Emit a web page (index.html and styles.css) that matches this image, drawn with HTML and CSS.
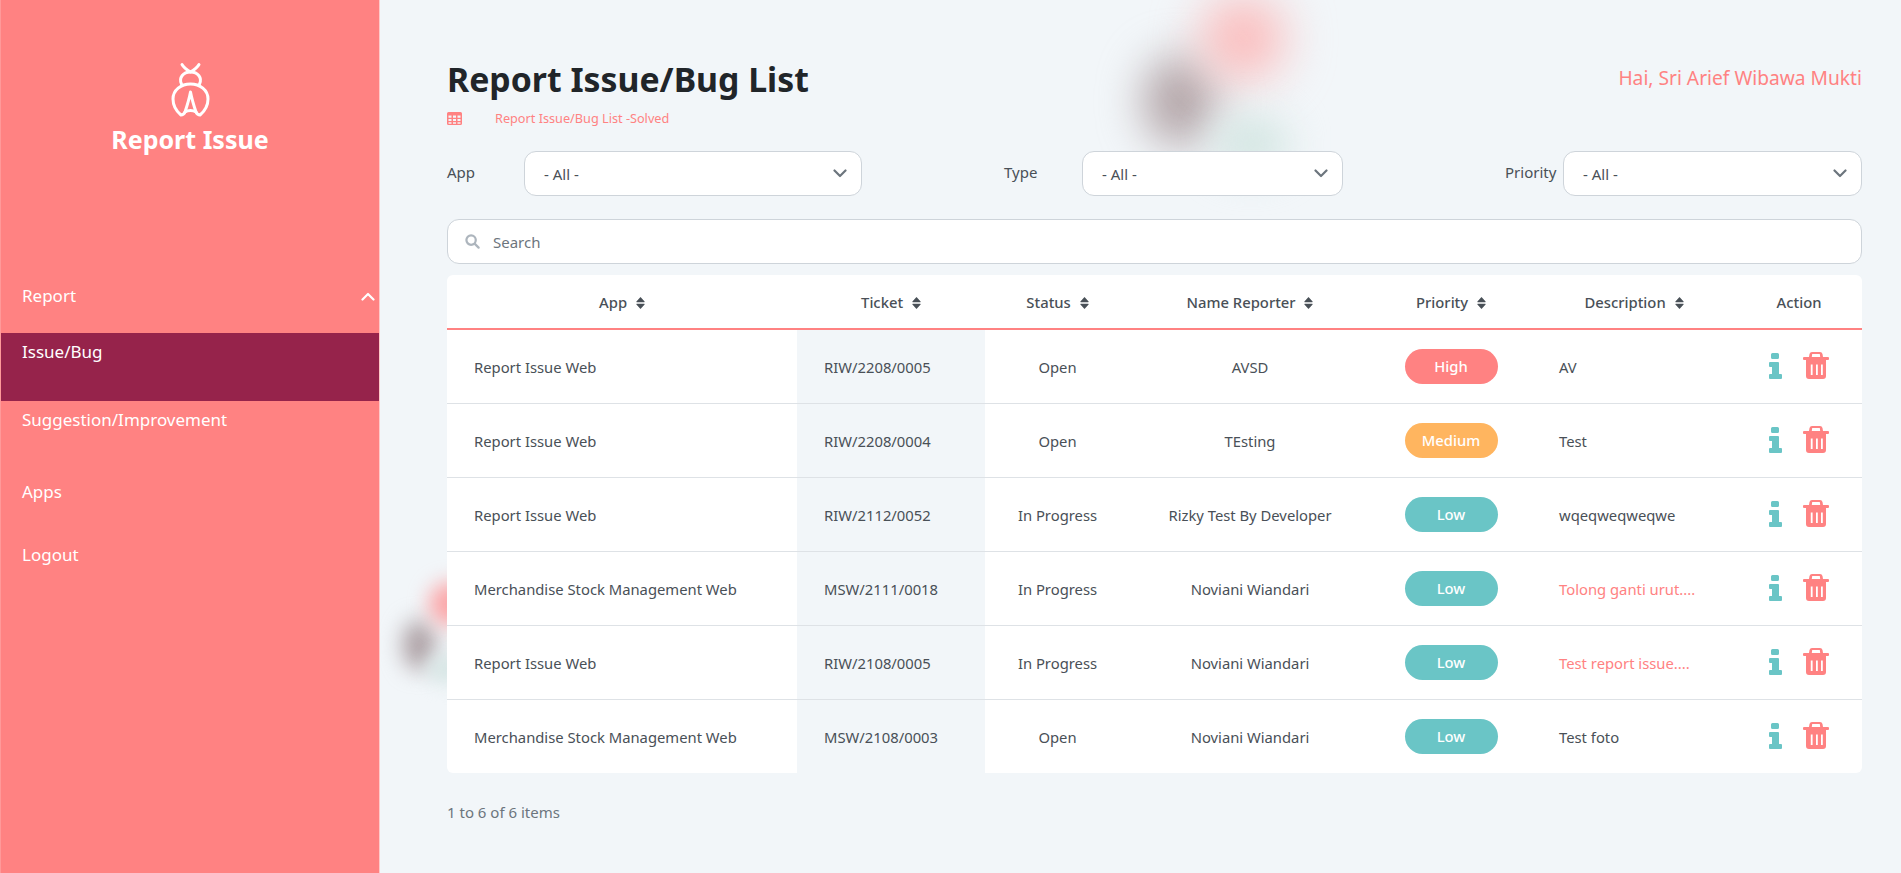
FILE: index.html
```html
<!doctype html>
<html>
<head>
    <meta charset="utf-8"/>
    <title>Report Issue</title>
    <link rel="stylesheet" href="styles.css">
</head>
<body>

<svg class="defs" width="0" height="0">
    <symbol id="sort" viewBox="0 0 9 12"><path d="M4.500 0 L8.600 4.600 Q8.900 5.200 8.200 5.200 H.8 Q.1 5.200 .4 4.600 Z M4.500 12 L8.600 7.400 Q8.900 6.800 8.200 6.800 H.8 Q.1 6.800 .4 7.400 Z"/></symbol>
    <symbol id="chev" viewBox="0 0 14 9"><path d="M1.500 1.500 L7 7 L12.500 1.500" fill="none" stroke="currentColor" stroke-width="2.200" stroke-linecap="round" stroke-linejoin="round"/></symbol>
    <symbol id="info" viewBox="0 0 13 26"><path d="M3.500 0 H8.500 Q10 0 10 1.500 V4.500 Q10 6 8.500 6 H3.500 Q2 6 2 4.500 V1.500 Q2 0 3.500 0 Z M1 9 H9 Q10 9 10 10 V21 H12 Q13 21 13 22 V25 Q13 26 12 26 H1 Q0 26 0 25 V22 Q0 21 1 21 H3 V14 H1 Q0 14 0 13 V10 Q0 9 1 9 Z"/></symbol>
    <symbol id="trash" viewBox="0 0 26 27"><path fill-rule="evenodd" d="M9 0 H17 Q19 0 19.500 2 L20 5 H25 Q26 5 26 6 V7 Q26 8 25 8 H23 V24 Q23 27 20 27 H6 Q3 27 3 24 V8 H1 Q0 8 0 7 V6 Q0 5 1 5 H6 L6.500 2 Q7 0 9 0 Z M9.200 2 L8.800 5 H17.200 L16.800 2 Z M7.800 12.500 V23 H9.600 V12.500 Z M13 12.500 V23 H14.800 V12.500 Z M18 12.500 V23 H19.800 V12.500 Z"/></symbol>
</svg>

<div class="layout">
    <aside class="sidebar">
        <div class="brand">
            <svg class="brand-icon" viewBox="170 60 40 57" fill="none" stroke="#fff" stroke-width="3" stroke-linecap="round" stroke-linejoin="round">
                <path d="M182 64.500 C184 68 187 70 190.500 72 C194 70 197 68 199 64.500"/>
                <path d="M181.500 84 C178.500 78 183 72 190.500 72 C198 72 202.500 78 199.500 84"/>
                <path d="M181 115 C175 110 173 104 173 99 C173 90 181 84 190.500 84 C200 84 208 90 208 99 C208 104 206 110 200 115 C198 115 197 114 196 112 C193 110 188 110 185 112 C184 114 183 115 181 115 Z"/>
                <path d="M185 112 C187 106 189 100 190.500 92 C192 100 194 106 196 112"/>
            </svg>
            <div class="brand-name">Report Issue</div>
        </div>
        <nav class="menu">
            <a class="menu-head">Report <svg class="menu-chev"><use href="#chev"/></svg></a>
            <a class="menu-sub active">Issue/Bug</a>
            <a class="menu-sub">Suggestion/Improvement</a>
            <a class="menu-item">Apps</a>
            <a class="menu-item">Logout</a>
        </nav>
    </aside>

    <main class="main">
        <div class="blobs blobs-top"><i class="blob grey"></i><i class="blob pink"></i><i class="blob mint"></i></div>
        <div class="blobs blobs-mid"><i class="blob grey"></i><i class="blob pink"></i><i class="blob mint"></i></div>

        <div class="content">
            <header class="top">
                <div>
                    <h1>Report Issue/Bug List</h1>
                    <div class="crumb">
                        <svg class="crumb-icon" viewBox="0 0 15 13"><path fill-rule="evenodd" d="M1.500 0 H13.500 Q15 0 15 1.500 V11.500 Q15 13 13.500 13 H1.500 Q0 13 0 11.500 V1.500 Q0 0 1.500 0 Z M1.500 3.500 V5.800 H4.500 V3.500 Z M6 3.500 V5.800 H9 V3.500 Z M10.500 3.500 V5.800 H13.500 V3.500 Z M1.500 7 V9 H4.500 V7 Z M6 7 V9 H9 V7 Z M10.500 7 V9 H13.500 V7 Z M1.500 10.200 V11.800 H4.500 V10.200 Z M6 10.200 V11.800 H9 V10.200 Z M10.500 10.200 V11.800 H13.500 V10.200 Z"/></svg>
                        <span>Report Issue/Bug List -Solved</span>
                    </div>
                </div>
                <div class="greeting">Hai, Sri Arief Wibawa Mukti</div>
            </header>

            <div class="filters">
                <div class="filter f-app">
                    <label>App</label>
                    <div class="select"><span>- All -</span><svg class="select-chev"><use href="#chev"/></svg></div>
                </div>
                <div class="filter f-type">
                    <label>Type</label>
                    <div class="select"><span>- All -</span><svg class="select-chev"><use href="#chev"/></svg></div>
                </div>
                <div class="filter f-priority">
                    <label>Priority</label>
                    <div class="select"><span>- All -</span><svg class="select-chev"><use href="#chev"/></svg></div>
                </div>
            </div>

            <div class="search">
                <svg class="search-icon" viewBox="0 0 16 16" fill="none" stroke="#adb5bd" stroke-width="2.400" stroke-linecap="round"><circle cx="6.500" cy="6.500" r="5"/><path d="M10.500 10.500 L14.500 14.500"/></svg>
                <span>Search</span>
            </div>

            <div class="table-wrap">
                <table>
                    <colgroup>
                        <col class="c-app"><col class="c-ticket"><col class="c-status"><col class="c-name"><col class="c-priority"><col class="c-desc"><col>
                    </colgroup>
                    <thead>
                        <tr>
                            <th>App <svg class="sort"><use href="#sort"/></svg></th>
                            <th>Ticket <svg class="sort"><use href="#sort"/></svg></th>
                            <th>Status <svg class="sort"><use href="#sort"/></svg></th>
                            <th>Name Reporter <svg class="sort"><use href="#sort"/></svg></th>
                            <th>Priority <svg class="sort"><use href="#sort"/></svg></th>
                            <th>Description <svg class="sort"><use href="#sort"/></svg></th>
                            <th>Action</th>
                        </tr>
                    </thead>
                    <tbody>
                        <tr>
                            <td class="left">Report Issue Web</td><td class="left ticket">RIW/2208/0005</td><td>Open</td><td>AVSD</td>
                            <td><span class="pill high">High</span></td><td class="left">AV</td>
                            <td><div class="actions"><svg class="i-info"><use href="#info"/></svg><svg class="i-trash"><use href="#trash"/></svg></div></td>
                        </tr>
                        <tr>
                            <td class="left">Report Issue Web</td><td class="left ticket">RIW/2208/0004</td><td>Open</td><td>TEsting</td>
                            <td><span class="pill medium">Medium</span></td><td class="left">Test</td>
                            <td><div class="actions"><svg class="i-info"><use href="#info"/></svg><svg class="i-trash"><use href="#trash"/></svg></div></td>
                        </tr>
                        <tr>
                            <td class="left">Report Issue Web</td><td class="left ticket">RIW/2112/0052</td><td>In Progress</td><td>Rizky Test By Developer</td>
                            <td><span class="pill low">Low</span></td><td class="left">wqeqweqweqwe</td>
                            <td><div class="actions"><svg class="i-info"><use href="#info"/></svg><svg class="i-trash"><use href="#trash"/></svg></div></td>
                        </tr>
                        <tr>
                            <td class="left">Merchandise Stock Management Web</td><td class="left ticket">MSW/2111/0018</td><td>In Progress</td><td>Noviani Wiandari</td>
                            <td><span class="pill low">Low</span></td><td class="left more">Tolong ganti urut....</td>
                            <td><div class="actions"><svg class="i-info"><use href="#info"/></svg><svg class="i-trash"><use href="#trash"/></svg></div></td>
                        </tr>
                        <tr>
                            <td class="left">Report Issue Web</td><td class="left ticket">RIW/2108/0005</td><td>In Progress</td><td>Noviani Wiandari</td>
                            <td><span class="pill low">Low</span></td><td class="left more">Test report issue....</td>
                            <td><div class="actions"><svg class="i-info"><use href="#info"/></svg><svg class="i-trash"><use href="#trash"/></svg></div></td>
                        </tr>
                        <tr>
                            <td class="left">Merchandise Stock Management Web</td><td class="left ticket">MSW/2108/0003</td><td>Open</td><td>Noviani Wiandari</td>
                            <td><span class="pill low">Low</span></td><td class="left">Test foto</td>
                            <td><div class="actions"><svg class="i-info"><use href="#info"/></svg><svg class="i-trash"><use href="#trash"/></svg></div></td>
                        </tr>
                    </tbody>
                </table>
            </div>

            <div class="count">1 to 6 of 6 items</div>
        </div>
    </main>
</div>

</body>
</html>
```

FILE: styles.css
```css
body {
    margin: 0;
    background: #f2f6f9;
    color: #495057;
    font-family: "Noto Sans", sans-serif;
    font-size: 15px;
}
.defs {
    position: absolute;
}
.layout {
    display: flex;
    min-height: 100vh;
}

/* sidebar */
.sidebar {
    flex: 0 0 380px;
    box-sizing: border-box;
    background: #ff8282;
    border-left: 1px solid #ff9999;
    border-right: 1px solid #ffc9c9;
    color: #fff;
}
.brand {
    padding-top: 60px;
    text-align: center;
}
.brand-icon {
    display: block;
    width: 40px;
    height: 57px;
    margin: 0 auto;
}
.brand-name {
    margin-top: 6px;
    font-size: 25px;
    line-height: 32px;
    font-weight: 700;
}
.menu {
    padding-top: 105px;
    font-size: 17px;
}
.menu a {
    display: block;
    box-sizing: border-box;
    padding: 8px 21px 0;
    line-height: 22px;
}
.menu-head {
    position: relative;
    height: 73px;
    padding-top: 25px !important;
}
.menu-chev {
    position: absolute;
    right: 4px;
    top: 32px;
    width: 14px;
    height: 9px;
    transform: rotate(180deg);
}
.menu-sub {
    height: 68px;
}
.menu-sub + .menu-sub {
    height: 72px;
}
.menu-item {
    height: 63px;
}
.menu .active {
    background: #96234b;
}

/* main */
.main {
    flex: 1;
    position: relative;
    overflow: hidden;
    padding: 0 39px 0 67px;
}
.content {
    position: relative;
}
.blobs {
    position: absolute;
}
.blob {
    position: absolute;
    display: block;
    border-radius: 50%;
}
.blobs-top {
    left: 739px;
    top: 0;
}
.blobs-top .grey { left: 24px; top: 56px; width: 74px; height: 90px; background: #b3a5a8; filter: blur(22px); }
.blobs-top .pink { left: 82px; top: -4px; width: 84px; height: 84px; background: #fbbcbc; filter: blur(24px); }
.blobs-top .mint { left: 92px; top: 114px; width: 80px; height: 60px; background: #d6e7e4; filter: blur(18px); }
.blobs-mid {
    left: -1px;
    top: 570px;
}
.blobs-mid .grey { left: 24px; top: 50px; width: 32px; height: 50px; background: #aa9da1; filter: blur(11px); }
.blobs-mid .pink { left: 50px; top: 12px; width: 44px; height: 44px; background: #fba5a7; filter: blur(10px); }
.blobs-mid .mint { left: 48px; top: 84px; width: 40px; height: 30px; background: #d7e6e5; filter: blur(9px); }

/* header */
.top {
    display: flex;
    justify-content: space-between;
    align-items: flex-start;
    padding-top: 55px;
}
h1 {
    margin: 0;
    color: #212529;
    font-size: 33.8px;
    line-height: 49px;
    font-weight: 700;
}
.crumb {
    display: flex;
    align-items: center;
    height: 18px;
    margin-top: 5px;
    color: #ff8282;
    font-size: 12.7px;
}
.crumb-icon {
    width: 15px;
    height: 13px;
    margin-right: 33px;
    fill: #ff8282;
}
.greeting {
    padding-top: 10px;
    color: #ff8282;
    font-size: 19.2px;
    line-height: 26px;
}

/* filters */
.filters {
    display: flex;
    margin-top: 24px;
}
.filter {
    display: flex;
    align-items: center;
}
.filter label {
    padding-bottom: 3px;
    white-space: nowrap;
}
.f-app { width: 415px; }
.f-app label { width: 77px; }
.f-type { width: 339px; margin-left: 142px; }
.f-type label { width: 78px; }
.f-priority { width: 357px; margin-left: 162px; }
.f-priority label { width: 58px; }
.select {
    flex: 1;
    display: flex;
    justify-content: space-between;
    align-items: center;
    box-sizing: border-box;
    height: 45px;
    padding: 0 14px 0 19px;
    background: #fff;
    border: 1px solid #ced4da;
    border-radius: 12px;
}
.select-chev {
    width: 14px;
    height: 9px;
    color: #6c757d;
}

/* search */
.search {
    display: flex;
    align-items: center;
    box-sizing: border-box;
    height: 45px;
    margin-top: 23px;
    padding-left: 17px;
    background: #fff;
    border: 1px solid #ced4da;
    border-radius: 12px;
    color: #6c757d;
}
.search-icon {
    width: 15px;
    height: 15px;
    margin-right: 13px;
}

/* table */
.table-wrap {
    margin-top: 11px;
    background: #fff;
    border-radius: 6px;
    overflow: hidden;
}
table {
    width: 100%;
    table-layout: fixed;
    border-collapse: collapse;
    font-size: 14.8px;
}
.c-app { width: 350px; }
.c-ticket { width: 188px; }
.c-status { width: 145px; }
.c-name { width: 240px; }
.c-priority { width: 162px; }
.c-desc { width: 204px; }
th {
    height: 53px;
    padding: 0;
    border-bottom: 2px solid #ff8282;
    font-weight: 500;
}
td {
    height: 73px;
    padding: 0;
    border-bottom: 1px solid #dee2e6;
    text-align: center;
    white-space: nowrap;
}
tbody tr:last-child td {
    height: 73px;
    border-bottom: 0;
}
.sort {
    width: 9px;
    height: 12px;
    margin-left: 5px;
    fill: #495057;
    vertical-align: -1px;
}
td.left {
    padding-left: 27px;
    text-align: left;
}
.ticket {
    background: #f2f6f9;
}
.more {
    color: #ff8282;
}
.pill {
    display: inline-block;
    width: 93px;
    height: 35px;
    border-radius: 18px;
    color: #fff;
    font-weight: 500;
    line-height: 35px;
}
.high { background: #ff8282; }
.medium { background: #ffb55f; }
.low { background: #6ac5c6; }
.actions {
    display: flex;
    justify-content: center;
    align-items: center;
    gap: 21px;
    padding-bottom: 2px;
}
.i-info {
    width: 13px;
    height: 26px;
    fill: #6ac5c6;
}
.i-trash {
    width: 26px;
    height: 27px;
    fill: #ff8282;
}
.count {
    margin-top: 29px;
    color: #6c757d;
}
```
